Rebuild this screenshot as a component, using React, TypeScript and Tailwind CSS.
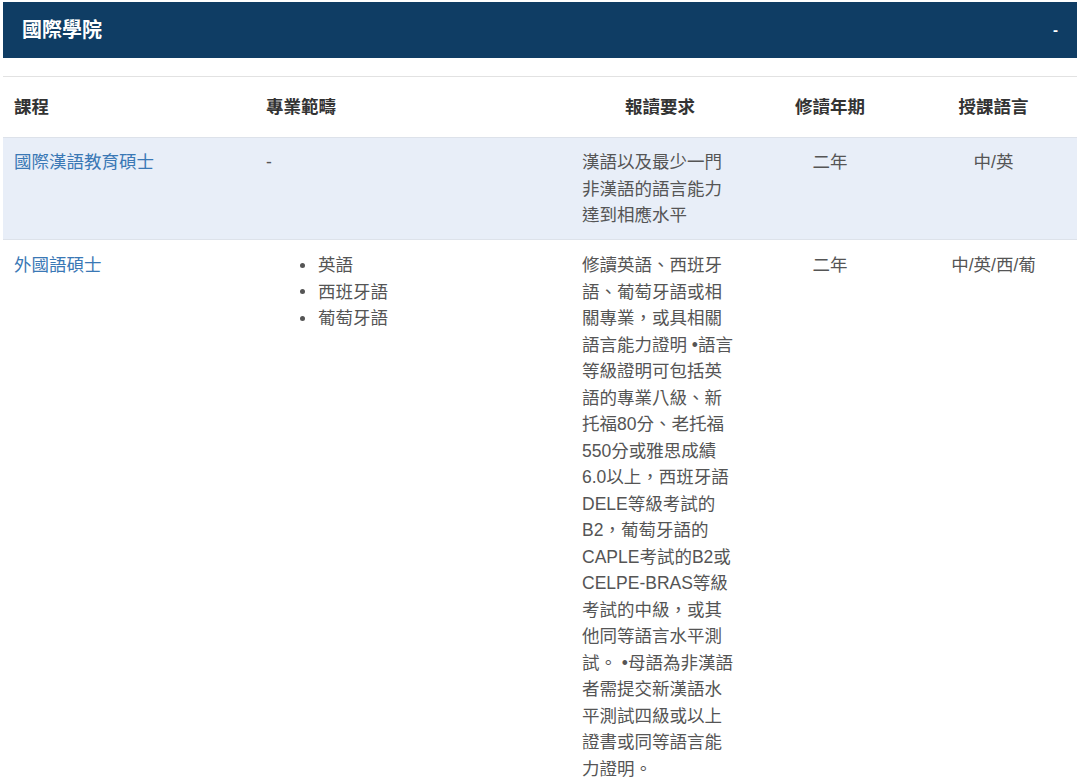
import React from "react";

const req2 = [
  "修讀英語、西班牙",
  "語、葡萄牙語或相",
  "關專業，或具相關",
  "語言能力證明 •語言",
  "等級證明可包括英",
  "語的專業八級、新",
  "托福80分、老托福",
  "550分或雅思成績",
  "6.0以上，西班牙語",
  "DELE等級考試的",
  "B2，葡萄牙語的",
  "CAPLE考試的B2或",
  "CELPE-BRAS等級",
  "考試的中級，或其",
  "他同等語言水平測",
  "試。 •母語為非漢語",
  "者需提交新漢語水",
  "平測試四級或以上",
  "證書或同等語言能",
  "力證明。",
];
const req1 = ["漢語以及最少一門", "非漢語的語言能力", "達到相應水平"];

export default function App() {
  return (
    <div
      className="w-[1080px] h-[782px] overflow-hidden bg-white text-[17.5px] leading-[26.5px] text-[#555]"
      style={{ fontFamily: '"Liberation Sans", "Noto Sans CJK TC", sans-serif' }}
    >
      <div className="mx-[3px] mt-[2px] h-[56px] bg-[#0f3d64] flex items-center justify-between px-[19px] text-white">
        <span className="font-bold text-[20px]">國際學院</span>
        <span className="font-bold text-[15px]">-</span>
      </div>
      <div className="mx-[3px] mt-[18px] border-t border-[#e2e2e2]">
        <div className="flex h-[61px] items-center font-bold text-[#333] border-b border-[#dde2ea]">
          <div className="w-[249px] pl-[11px]">課程</div>
          <div className="w-[316px] pl-[14px]">專業範疇</div>
          <div className="w-[182px] text-center pl-[2px]">報讀要求</div>
          <div className="w-[160px] text-center">修讀年期</div>
          <div className="flex-1 text-center">授課語言</div>
        </div>
        <div className="flex h-[102px] pt-[11px] bg-[#e8eef8] border-b border-[#dde2ea]">
          <div className="w-[249px] pl-[11px] text-[#3a78b5]">國際漢語教育碩士</div>
          <div className="w-[316px] pl-[14px]">-</div>
          <div className="w-[182px] pl-[14px] whitespace-nowrap">
            {req1.map((l) => (
              <div key={l}>{l}</div>
            ))}
          </div>
          <div className="w-[160px] text-center">二年</div>
          <div className="flex-1 text-center">中/英</div>
        </div>
        <div className="flex pt-[12px]">
          <div className="w-[249px] pl-[11px] text-[#3a78b5]">外國語碩士</div>
          <div className="w-[316px] pl-[29px]">
            {["英語", "西班牙語", "葡萄牙語"].map((t) => (
              <div key={t} className="flex items-center">
                <span className="inline-block w-[5px] h-[5px] rounded-full bg-[#555] mr-[13px] ml-[19px]" />
                {t}
              </div>
            ))}
          </div>
          <div className="w-[182px] pl-[14px] whitespace-nowrap">
            {req2.map((l) => (
              <div key={l}>{l}</div>
            ))}
          </div>
          <div className="w-[160px] text-center">二年</div>
          <div className="flex-1 text-center">中/英/西/葡</div>
        </div>
      </div>
    </div>
  );
}
